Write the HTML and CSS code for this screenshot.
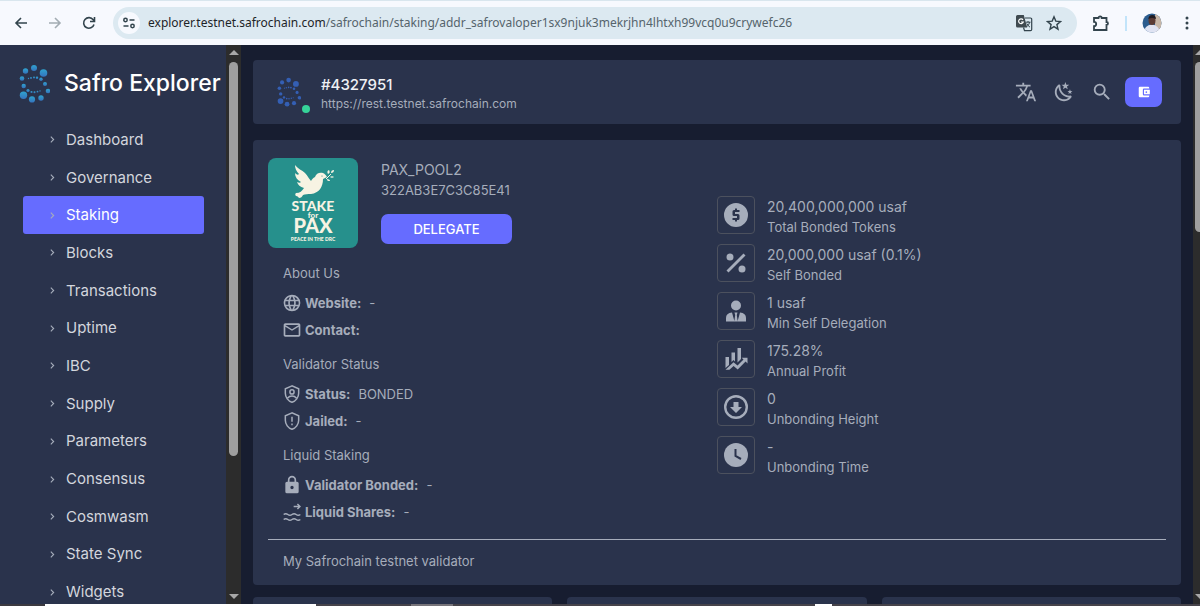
FILE: index.html
```html
<!DOCTYPE html>
<html lang="en">
<head>
  <meta charset="UTF-8">
  <meta name="viewport" content="width=device-width, initial-scale=1.0">
  <title>Safro Explorer</title>
  <link rel="stylesheet" href="styles.css">
</head>
<body>
  <!-- shared symbols -->
  <svg class="defs" width="0" height="0" aria-hidden="true">
    <defs>
      <linearGradient id="dots" x1="0" y1="0" x2="0" y2="1">
        <stop offset="0" stop-color="#2fa3cf"/>
        <stop offset="1" stop-color="#3573bd"/>
      </linearGradient>
      <symbol id="logo" viewBox="19 63 31 39">
        <circle cx="34" cy="67" r="3"/>
        <circle cx="43.5" cy="72" r="3.8"/>
        <circle cx="25.5" cy="70" r="2.7"/>
        <circle cx="22" cy="77.5" r="2.3"/>
        <circle cx="23.7" cy="85" r="2.2"/>
        <circle cx="23.5" cy="94.3" r="3.7"/>
        <circle cx="32" cy="98.4" r="3.1"/>
        <circle cx="41" cy="97" r="2.7"/>
        <circle cx="48" cy="90" r="2.3"/>
        <circle cx="45" cy="83" r="2"/>
        <circle cx="41" cy="78.2" r="1.7"/>
        <circle cx="28" cy="89.5" r="1.6"/>
        <circle cx="28.5" cy="77.5" r=".7"/>
        <circle cx="31" cy="77" r=".9"/>
        <circle cx="34" cy="76.5" r="1"/>
        <circle cx="37" cy="76.8" r="1.2"/>
        <circle cx="31.5" cy="91" r="1.1"/>
        <circle cx="34.5" cy="91.2" r="1"/>
        <circle cx="37.5" cy="90.7" r=".9"/>
        <circle cx="40" cy="90" r=".7"/>
      </symbol>
      <symbol id="chevron" viewBox="0 0 8 8">
        <path d="M2.5 1.5L5 4 2.5 6.5" fill="none" stroke="currentColor" stroke-width="1"/>
      </symbol>
    </defs>
  </svg>

  <header class="browser-bar">
    <div class="browser-nav">
      <button class="bar-btn" aria-label="Back">
        <svg width="16" height="16" viewBox="0 0 16 16"><path d="M14 8H3M8 3L3 8l5 5" /></svg>
      </button>
      <button class="bar-btn muted" aria-label="Forward">
        <svg width="16" height="16" viewBox="0 0 16 16"><path d="M2 8h11M8 3l5 5-5 5" /></svg>
      </button>
      <button class="bar-btn" aria-label="Reload">
        <svg width="16" height="16" viewBox="0 0 16 16"><path d="M13 9.5A5.3 5.3 0 1 1 12.2 4.800L13.500 6.200M13.500 2v4.500H9" /></svg>
      </button>
    </div>
    <div class="address">
      <button class="site-info" aria-label="Site information">
        <svg width="14" height="14" viewBox="0 0 14 14"><circle cx="3.500" cy="4" r="1.700"/><path d="M7.500 4H12.500M1.500 10H6.500"/><circle cx="10.500" cy="10" r="1.700"/></svg>
      </button>
      <span class="url"><span class="host">explorer.testnet.safrochain.com</span>/safrochain/staking/addr_safrovaloper1sx9njuk3mekrjhn4lhtxh99vcq0u9crywefc26</span>
      <button class="bar-btn" aria-label="Translate page">
        <svg width="18" height="18" viewBox="0 0 18 18">
          <path d="M2.500 1h6.300l3.400 12.500H2.500A1.500 1.500 0 0 1 1 12V2.500A1.500 1.500 0 0 1 2.500 1z" fill="#3f4a50" stroke="none"/>
          <path d="M10 4h5.500A1.200 1.200 0 0 1 16.700 5.200V15.500A1.200 1.200 0 0 1 15.500 16.700H9.500L8.500 13.500" stroke-width="1.200"/>
          <path d="M8 5.800A2.400 2.400 0 1 0 8.300 8H6" stroke="#fff" stroke-width="1.200"/>
          <path d="M10.800 8.200h4.700M13 7v1.200M14.700 8.200q-.8 3-3 4.600M11.800 9.500q1 2.200 3.200 3.700" stroke-width="1"/>
        </svg>
      </button>
      <button class="bar-btn" aria-label="Bookmark">
        <svg width="16" height="16" viewBox="0 0 16 16"><path d="M8 1.800l1.800 4.300 4.700.4-3.600 3.100 1.100 4.600L8 11.700l-4 2.500 1.100-4.600L1.500 6.500l4.700-.4z" stroke-width="1.400"/></svg>
      </button>
    </div>
    <div class="browser-tools">
      <button class="bar-btn" aria-label="Extensions">
        <svg width="18" height="18" viewBox="0 0 18 18"><path d="M2 4h4.500a1.600 1.600 0 0 1 3.200 0H14.500V8a1.500 1.500 0 0 1 0 3v5H2v-3.800a2.200 2.200 0 0 0 0-4.400z" stroke-width="1.800"/></svg>
      </button>
      <span class="divider"></span>
      <button class="bar-btn" aria-label="Profile">
        <svg width="20" height="20" viewBox="0 0 20 20" class="face">
          <clipPath id="round"><circle cx="10" cy="10" r="9.500"/></clipPath>
          <g clip-path="url(#round)">
            <rect width="20" height="20" fill="#2b5c8e"/>
            <rect x="13" width="7" height="20" fill="#c7b7a8"/>
            <path d="M2 20q0-8 8-8.500 7 .5 8 8.500z" fill="#dfe3f2"/>
            <ellipse cx="10" cy="7.500" rx="3.500" ry="4.500" fill="#5b3b34"/>
            <path d="M6.300 6q.5-4 4-4t3.700 4q-4-2-7.700 0z" fill="#211b20"/>
          </g>
        </svg>
      </button>
      <button class="bar-btn" aria-label="Menu">
        <svg width="20" height="16" viewBox="0 0 20 16" class="solid"><circle cx="10" cy="3" r="1.500"/><circle cx="10" cy="8" r="1.500"/><circle cx="10" cy="13" r="1.500"/></svg>
      </button>
    </div>
  </header>

  <div class="app">
    <aside class="sidebar">
      <a href="#" class="brand">
        <svg class="brand-logo"><use href="#logo"/></svg>
        <span>Safro Explorer</span>
      </a>
      <nav class="menu">
        <a href="#"><svg><use href="#chevron"/></svg>Dashboard</a>
        <a href="#"><svg><use href="#chevron"/></svg>Governance</a>
        <a href="#" class="active"><svg><use href="#chevron"/></svg>Staking</a>
        <a href="#"><svg><use href="#chevron"/></svg>Blocks</a>
        <a href="#"><svg><use href="#chevron"/></svg>Transactions</a>
        <a href="#"><svg><use href="#chevron"/></svg>Uptime</a>
        <a href="#"><svg><use href="#chevron"/></svg>IBC</a>
        <a href="#"><svg><use href="#chevron"/></svg>Supply</a>
        <a href="#"><svg><use href="#chevron"/></svg>Parameters</a>
        <a href="#"><svg><use href="#chevron"/></svg>Consensus</a>
        <a href="#"><svg><use href="#chevron"/></svg>Cosmwasm</a>
        <a href="#"><svg><use href="#chevron"/></svg>State Sync</a>
        <a href="#"><svg><use href="#chevron"/></svg>Widgets</a>
      </nav>
    </aside>
    <div class="scrollbar">
      <span class="arrow up"></span>
      <span class="track"><span class="thumb thumb-side"></span></span>
      <span class="arrow down"></span>
    </div>

    <main class="content">
      <section class="card topbar">
        <div class="chain-logo">
          <svg><use href="#logo"/></svg>
          <span class="online"></span>
        </div>
        <div class="chain">
          <div class="height">#4327951</div>
          <div class="endpoint">https://rest.testnet.safrochain.com</div>
        </div>
        <div class="actions">
          <button class="icon-btn" aria-label="Language">
            <svg width="22" height="22" viewBox="0 0 24 24"><path d="M12.870 15.070l-2.540-2.510.03-.03A17.520 17.520 0 0 0 14.070 6H17V4h-7V2H8v2H1v2h11.170C11.500 7.920 10.440 9.750 9 11.350 8.070 10.320 7.300 9.190 6.690 8h-2c.73 1.630 1.730 3.170 2.980 4.560l-5.090 5.020L4 19l5-5 3.110 3.110.76-2.040zM18.500 10h-2L12 22h2l1.120-3h4.750L21 22h2l-4.500-12zm-2.620 7l1.620-4.330L19.120 17h-3.240z"/></svg>
          </button>
          <button class="icon-btn" aria-label="Theme">
            <svg width="22" height="22" viewBox="0 0 24 24"><path d="M17.75,4.09L15.22,6.03L16.13,9.09L13.5,7.28L10.87,9.09L11.78,6.03L9.25,4.09L12.44,4L13.5,1L14.56,4L17.75,4.09M21.25,11L19.61,12.25L20.2,14.23L18.5,13.06L16.8,14.23L17.39,12.25L15.75,11L17.81,10.95L18.5,9L19.19,10.95L21.25,11M18.97,15.95C19.8,15.87 20.69,17.05 20.16,17.8C19.84,18.25 19.5,18.67 19.08,19.07C15.17,23 8.84,23 4.94,19.07C1.03,15.17 1.03,8.83 4.94,4.93C5.34,4.53 5.76,4.17 6.21,3.85C6.96,3.32 8.14,4.21 8.06,5.04C7.79,7.9 8.75,10.87 10.95,13.06C13.14,15.26 16.1,16.22 18.97,15.95M17.33,17.97C14.5,17.81 11.7,16.64 9.53,14.5C7.36,12.31 6.2,9.5 6.04,6.68C3.23,9.82 3.34,14.64 6.35,17.66C9.37,20.67 14.19,20.78 17.33,17.97Z"/></svg>
          </button>
          <button class="icon-btn" aria-label="Search">
            <svg width="22" height="22" viewBox="0 0 24 24"><path d="M9.5,3A6.5,6.5 0 0,1 16,9.5C16,11.11 15.41,12.59 14.44,13.73L14.71,14H15.5L20.5,19L19,20.5L14,15.5V14.71L13.73,14.44C12.59,15.41 11.11,16 9.5,16A6.5,6.5 0 0,1 3,9.5A6.5,6.5 0 0,1 9.5,3M9.5,5C7,5 5,7 5,9.5C5,12 7,14 9.5,14C12,14 14,12 14,9.5C14,7 12,5 9.5,5Z"/></svg>
          </button>
          <button class="wallet-btn" aria-label="Wallet">
            <svg width="14" height="14" viewBox="0 0 24 24"><path d="M21 18v1a2 2 0 0 1-2 2H5a2 2 0 0 1-2-2V5a2 2 0 0 1 2-2h14a2 2 0 0 1 2 2v1h-9a2 2 0 0 0-2 2v8a2 2 0 0 0 2 2h9zm-9-2h10V8H12v8zm4-2.500a1.500 1.500 0 1 1 0-3 1.500 1.500 0 0 1 0 3z"/></svg>
          </button>
        </div>
      </section>

      <section class="card validator">
        <div class="columns">
          <div class="profile">
            <div class="identity">
              <svg class="avatar" viewBox="0 0 90 90" role="img" aria-label="Stake for Pax">
                <rect width="90" height="90" fill="#26908c"/>
                <g fill="#f7f3e3">
                  <path d="M27 7c3 4 7 5 10 8 3 3 4 6 6 8 1-2 2-3 4-4 1-4 5-5 8-4 2 1 3 2 4 4l-4 2c0 8-4 14-12 15-3 0-6 0-8 1-1 2-2 3-4 3-1-1-1-2-3-2-1-1-1-2 0-3 4 0 6-2 8-5-4-1-6-3-7-6 2 1 3 1 4 0-4-2-6-5-6-9 2 2 3 2 4 1-3-3-4-6-4-9z"/>
                  <path d="M60 16c-1-2-1-3 1-4 1 2 1 3-1 4zM63 15c0-2 1-3 3-3 0 2-1 3-3 3zM62 19c1-1 3-1 4 0-1 1-3 1-4 0zM59 21c2 0 3 1 3 2-2 0-3 0-3-2z"/>
                </g>
                <path d="M58 21l5-5" stroke="#f7f3e3" stroke-width="1" fill="none"/>
                <circle cx="54" cy="18" r=".6" fill="#26908c"/>
                <g class="avatar-text" text-anchor="middle">
                  <text x="45" y="53" font-size="14">STAKE</text>
                  <text x="45" y="60" font-size="8">for</text>
                  <text x="45" y="75" font-size="20">PAX</text>
                  <text x="45" y="83" font-size="5">PEACE IN THE DRC</text>
                </g>
              </svg>
              <div class="who">
                <h1>PAX_POOL2</h1>
                <div class="hash">322AB3E7C3C85E41</div>
                <button class="delegate">DELEGATE</button>
              </div>
            </div>

            <div class="details">
              <section class="group">
                <h2>About Us</h2>
                <div class="row">
                  <svg viewBox="0 0 24 24"><path d="M16.36,14C16.44,13.34 16.5,12.68 16.5,12C16.5,11.32 16.44,10.66 16.36,10H19.74C19.9,10.64 20,11.31 20,12C20,12.69 19.9,13.36 19.74,14M14.59,19.56C15.19,18.45 15.65,17.25 15.97,16H18.92C17.96,17.65 16.43,18.93 14.59,19.56M14.34,14H9.66C9.56,13.34 9.5,12.68 9.5,12C9.5,11.32 9.56,10.65 9.66,10H14.34C14.43,10.65 14.5,11.32 14.5,12C14.5,12.68 14.43,13.34 14.34,14M12,19.96C11.17,18.76 10.5,17.43 10.09,16H13.91C13.5,17.43 12.83,18.76 12,19.96M8,8H5.08C6.03,6.34 7.57,5.06 9.4,4.44C8.8,5.55 8.35,6.75 8,8M5.08,16H8C8.35,17.25 8.8,18.45 9.4,19.56C7.57,18.93 6.03,17.65 5.08,16M4.26,14C4.1,13.36 4,12.69 4,12C4,11.31 4.1,10.64 4.26,10H7.64C7.56,10.66 7.5,11.32 7.5,12C7.5,12.68 7.56,13.34 7.64,14M12,4.03C12.83,5.23 13.5,6.57 13.91,8H10.09C10.5,6.57 11.17,5.23 12,4.03M18.92,8H15.97C15.65,6.75 15.19,5.55 14.59,4.44C16.43,5.07 17.96,6.34 18.92,8M12,2C6.47,2 2,6.5 2,12A10,10 0 0,0 12,22A10,10 0 0,0 22,12A10,10 0 0,0 12,2Z"/></svg>
                  <b>Website:</b><span>-</span>
                </div>
                <div class="row">
                  <svg viewBox="0 0 24 24"><path d="M22 6C22 4.900 21.100 4 20 4H4C2.900 4 2 4.900 2 6V18C2 19.100 2.900 20 4 20H20C21.100 20 22 19.100 22 18V6M20 6L12 11L4 6H20M20 18H4V8L12 13L20 8V18Z"/></svg>
                  <b>Contact:</b>
                </div>
              </section>
              <section class="group">
                <h2>Validator Status</h2>
                <div class="row">
                  <svg viewBox="0 0 24 24" class="outline"><path d="M12 2.200L4 5.700V11c0 5 3.400 9.600 8 10.900 4.600-1.300 8-5.900 8-10.900V5.700z"/><circle cx="12" cy="9.500" r="2.500"/><path d="M6.500 17c3-3.300 8-3.300 11 0"/></svg>
                  <b>Status:</b><span>BONDED</span>
                </div>
                <div class="row">
                  <svg viewBox="0 0 24 24" class="outline"><path d="M12 2.200L4 5.700V11c0 5 3.400 9.600 8 10.900 4.600-1.300 8-5.900 8-10.900V5.700zM12 7v6M12 15v2"/></svg>
                  <b>Jailed:</b><span>-</span>
                </div>
              </section>
              <section class="group">
                <h2>Liquid Staking</h2>
                <div class="row">
                  <svg viewBox="0 0 24 24"><path d="M12,17A2,2 0 0,0 14,15C14,13.89 13.1,13 12,13A2,2 0 0,0 10,15A2,2 0 0,0 12,17M18,8A2,2 0 0,1 20,10V20A2,2 0 0,1 18,22H6A2,2 0 0,1 4,20V10C4,8.89 4.9,8 6,8H7V6A5,5 0 0,1 12,1A5,5 0 0,1 17,6V8H18M12,3A3,3 0 0,0 9,6V8H15V6A3,3 0 0,0 12,3Z"/></svg>
                  <b>Validator Bonded:</b><span>-</span>
                </div>
                <div class="row">
                  <svg viewBox="0 0 24 24" class="outline"><path d="M14 5.500h7M18.500 2.500l3 3-3 3M2 15q2.500-2 5 0t5 0 5 0 5 0M2 21q2.500-2 5 0t5 0 5 0 5 0"/></svg>
                  <b>Liquid Shares:</b><span>-</span>
                </div>
              </section>
            </div>
          </div>

          <div class="stats">
            <div class="stat">
              <span class="stat-icon"><svg viewBox="0 0 24 24"><path fill-rule="evenodd" d="M12 0a12 12 0 1 0 0 24 12 12 0 0 0 0-24zM11 5.500h2V7h2.500v2H11v2h3a1.500 1.500 0 0 1 1.500 1.500v3A1.500 1.500 0 0 1 14 17h-1v1.500h-2V17H8.500v-2H13v-2h-3a1.500 1.500 0 0 1-1.500-1.500v-3A1.500 1.500 0 0 1 10 7h1z"/></svg></span>
              <div><div class="value">20,400,000,000 usaf</div><div class="label">Total Bonded Tokens</div></div>
            </div>
            <div class="stat">
              <span class="stat-icon"><svg viewBox="0 0 24 24"><circle cx="6" cy="6" r="3.500"/><circle cx="18" cy="18" r="3.500"/><path d="M19.500 2.500l2 2-17 17-2-2z"/></svg></span>
              <div><div class="value">20,000,000 usaf (0.1%)</div><div class="label">Self Bonded</div></div>
            </div>
            <div class="stat">
              <span class="stat-icon"><svg viewBox="0 0 24 24"><circle cx="12" cy="6.500" r="5"/><path d="M2 22.500v-3.500Q2 14 8 13.500l2.500 9zM22 22.500v-3.500q0-5-6-5.500l-2.500 9zM10.500 13.500h3l-.7 2.500.9 6.500h-3.400l.9-6.500z"/></svg></span>
              <div><div class="value">1 usaf</div><div class="label">Min Self Delegation</div></div>
            </div>
            <div class="stat">
              <span class="stat-icon"><svg viewBox="0 0 24 24"><path d="M1.500 10H5v8l-3.500 3zM7.500 5.500H11v9l-1.500-1.500-2 2zM13.500 1H17v11l-3.500 3.500zM1.500 22.800L9.500 15.200l4 3.300 6-6-1.800-1.800H23.500v5.800l-1.900-1.900-7.900 7.900-4.100-3.500-4.200 3.800z"/></svg></span>
              <div><div class="value">175.28%</div><div class="label">Annual Profit</div></div>
            </div>
            <div class="stat">
              <span class="stat-icon"><svg viewBox="0 0 24 24"><circle cx="12" cy="12" r="10.800" fill="none" stroke="currentColor" stroke-width="2.400"/><path d="M9.500 7h5v5h3.500l-6 6-6-6h3.500z"/></svg></span>
              <div><div class="value">0</div><div class="label">Unbonding Height</div></div>
            </div>
            <div class="stat">
              <span class="stat-icon"><svg viewBox="0 0 24 24"><circle cx="12" cy="12" r="12"/><path class="hands" d="M11.500 6v7l5.500 3"/></svg></span>
              <div><div class="value">-</div><div class="label">Unbonding Time</div></div>
            </div>
          </div>
        </div>
        <p class="bio">My Safrochain testnet validator</p>
      </section>

      <div class="next-cards">
        <section class="card"></section>
        <section class="card"></section>
        <section class="card"></section>
      </div>
    </main>
    <div class="scrollbar scrollbar-page">
      <span class="arrow up"></span>
      <span class="track"><span class="thumb thumb-page"></span></span>
      <span class="arrow down"></span>
    </div>
  </div>
  <footer class="taskbar"></footer>
</body>
</html>
```
FILE: styles.css
```css
:root {
  --base: #171d30;
  --card: #2a334c;
  --primary: #666cff;
  --text: #a6adbb;
  --bar-text: #33444d;
}

* {
  box-sizing: border-box;
  margin: 0;
  padding: 0;
}

body {
  display: flex;
  flex-direction: column;
  height: 100vh;
  overflow: hidden;
  background: var(--base);
  color: var(--text);
  font-family: Inter, sans-serif;
  font-size: 14px;
  line-height: 20px;
}

a {
  color: inherit;
  text-decoration: none;
}

button {
  border: none;
  background: none;
  color: inherit;
  font: inherit;
  cursor: pointer;
}

svg {
  display: block;
  flex-shrink: 0;
  fill: currentColor;
}

.defs {
  position: absolute;
}

/* browser bar */
.browser-bar {
  display: flex;
  align-items: center;
  flex-shrink: 0;
  height: 45px;
  padding-right: 3px;
  background: #f7f9fe;
  border-top: 1px solid #d9e6ee;
  color: var(--bar-text);
}

.browser-nav {
  display: flex;
  gap: 18px;
  padding: 0 16px 0 13px;
}

.bar-btn svg {
  fill: none;
  stroke: currentColor;
  stroke-width: 1.6;
}

.bar-btn .solid {
  fill: currentColor;
  stroke: none;
}

.bar-btn .face {
  stroke: none;
}

.muted {
  color: #a3acb3;
}

.address {
  display: flex;
  align-items: center;
  flex: 1;
  gap: 13px;
  min-width: 0;
  height: 32px;
  padding: 0 15px 0 5px;
  border-radius: 16px;
  background: #dce9f1;
}

.site-info {
  display: flex;
  align-items: center;
  justify-content: center;
  width: 22px;
  height: 22px;
  border-radius: 50%;
  background: #f7f9fe;
}

.site-info svg {
  fill: none;
  stroke: currentColor;
  stroke-width: 1.5;
}

.url {
  flex: 1;
  min-width: 0;
  overflow: hidden;
  margin-left: -5px;
  color: #55646c;
  font-family: "Noto Sans", sans-serif;
  font-size: 12px;
  white-space: nowrap;
}

.host {
  color: #1c2428;
}

.browser-tools {
  display: flex;
  align-items: center;
  gap: 15px;
  padding-left: 15px;
}

.divider {
  width: 2px;
  height: 15px;
  background: #c2e4fa;
}

/* layout */
.app {
  display: flex;
  flex: 1;
  min-height: 0;
}

.sidebar {
  display: flex;
  flex-direction: column;
  width: 226px;
  flex-shrink: 0;
  overflow: hidden;
  background: var(--card);
}

.brand {
  display: flex;
  align-items: center;
  gap: 14px;
  height: 76px;
  flex-shrink: 0;
  padding-left: 19px;
  color: #fff;
  font-size: 23px;
  font-weight: 500;
  white-space: nowrap;
}

.brand-logo {
  width: 31px;
  height: 39px;
  fill: url(#dots);
}

.menu {
  display: flex;
  flex-direction: column;
  flex: 1;
  min-height: 0;
  margin: 0 22px -7px 23px;
}

.menu a {
  display: flex;
  align-items: center;
  flex: 1;
  gap: 9px;
  min-height: 37px;
  max-height: 38px;
  padding-left: 25px;
  border-radius: 3px;
  color: #d3d6dd;
  font-size: 15px;
}

.menu svg {
  width: 9px;
  height: 9px;
  color: var(--text);
}

.menu .active {
  background: var(--primary);
  color: #fff;
}

.scrollbar {
  display: flex;
  flex-direction: column;
  align-items: center;
  width: 15px;
  flex-shrink: 0;
  padding: 5px 0;
  background: #2c2c2c;
}

.scrollbar-page {
  width: 7px;
  align-items: flex-start;
  overflow: hidden;
  padding-left: 2px;
}

.arrow {
  border: 5px solid transparent;
}

.arrow.up {
  border-top: none;
  border-bottom-color: #a8a8a8;
}

.arrow.down {
  border-bottom: none;
  border-top-color: #a8a8a8;
}

.track {
  flex: 1;
  min-height: 0;
  padding-top: 7px;
}

.thumb {
  display: block;
  width: 9px;
  border-radius: 5px;
  background: #9f9f9f;
}

.thumb-side {
  height: 74%;
}

.thumb-page {
  height: 32%;
}

.content {
  flex: 1;
  min-width: 0;
  overflow: hidden;
  padding: 15px 12px 0;
}

.card {
  border-radius: 4px;
  background: var(--card);
}

/* top bar */
.topbar {
  display: flex;
  align-items: center;
  height: 64px;
  margin-bottom: 16px;
  padding: 0 19px 0 24px;
}

.chain-logo {
  position: relative;
  width: 44px;
}

.chain-logo svg {
  width: 24px;
  height: 30px;
  fill: #345fb4;
}

.online {
  position: absolute;
  right: 11px;
  bottom: -6px;
  width: 8px;
  height: 8px;
  border-radius: 50%;
  background: #36d399;
}

.chain {
  padding-top: 4px;
}

.height {
  color: #eef0f4;
  font-size: 15px;
  font-weight: 500;
}

.endpoint {
  font-size: 12px;
  line-height: 18px;
}

.actions {
  display: flex;
  align-items: center;
  gap: 16px;
  margin-left: auto;
}

.wallet-btn {
  display: flex;
  align-items: center;
  justify-content: center;
  width: 37px;
  height: 30px;
  margin-left: -4px;
  border-radius: 7px;
  background: var(--primary);
  color: #fff;
}

/* validator */
.validator {
  margin-bottom: 12px;
  padding: 18px 15px 14px;
}

.columns {
  display: grid;
  grid-template-columns: 1fr 1fr;
  padding-bottom: 14px;
  border-bottom: 1px solid var(--text);
}

.identity {
  display: flex;
  gap: 23px;
}

.avatar {
  width: 90px;
  height: 90px;
  border-radius: 8px;
}

.avatar-text {
  fill: #f7f3e3;
  font-family: Lato, sans-serif;
  font-weight: 900;
}

.who {
  padding-top: 2px;
}

h1,
h2 {
  font-size: 13px;
  font-weight: 400;
}

h1 {
  font-size: 14px;
}

.hash {
  font-size: 13px;
}

.delegate {
  display: block;
  width: 131px;
  height: 30px;
  margin-top: 14px;
  border-radius: 7px;
  background: var(--primary);
  color: #fff;
  font-size: 13px;
  font-weight: 500;
}

.details {
  display: flex;
  flex-direction: column;
  gap: 11px;
  padding: 15px 15px 0;
}

.group {
  display: flex;
  flex-direction: column;
  gap: 1px;
}

.group h2 {
  margin-bottom: 6px;
}

.row {
  display: flex;
  align-items: center;
  height: 26px;
  font-size: 13px;
}

.row svg {
  width: 20px;
  height: 20px;
  margin: 0 3px 0 -1px;
}

.row b {
  margin-right: 8px;
  font-weight: 700;
}

.outline {
  fill: none;
  stroke: currentColor;
  stroke-width: 1.8;
}

.stats {
  display: flex;
  flex-direction: column;
  gap: 8px;
  padding-top: 38px;
}

.stat {
  display: flex;
  align-items: flex-start;
  gap: 12px;
}

.stat-icon {
  display: flex;
  align-items: center;
  justify-content: center;
  width: 38px;
  height: 38px;
  border: 1px solid #4c515e;
  border-radius: 4px;
}

.stat-icon svg {
  width: 24px;
  height: 24px;
}

.hands {
  fill: none;
  stroke: var(--card);
  stroke-width: 2;
}

.value {
  font-size: 14px;
  line-height: 22px;
}

.label {
  font-size: 13px;
  line-height: 18px;
}

.bio {
  padding: 11px 15px 0;
  font-size: 13px;
}

.next-cards {
  display: grid;
  grid-template-columns: repeat(3, 1fr);
  gap: 15px;
}

.next-cards .card {
  height: 160px;
}

/* strip of the desktop taskbar under the window */
.taskbar {
  flex-shrink: 0;
  height: 2px;
  background: linear-gradient(90deg, #3c3a40 45px, #fff 45px 316px, #46434a 316px 411px, #77747a 411px 453px, #46434a 453px 815px, #fff 815px 832px, #46434a 832px);
}
```
